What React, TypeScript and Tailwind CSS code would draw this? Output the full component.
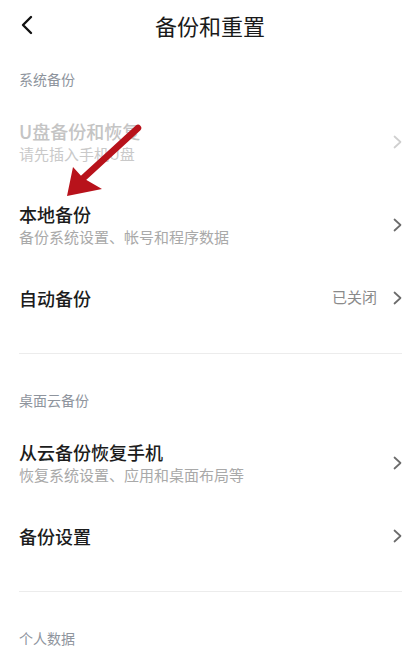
const FONT = "font-['Noto_Sans_CJK_SC','Noto_Sans',sans-serif]";

const Chevron = ({ disabled = false }: { disabled?: boolean }) => (
  <svg width="9" height="14" viewBox="0 0 9 14" fill="none" className="shrink-0">
    <path
      d="M1.5 1.5 L7.5 7 L1.5 12.5"
      stroke={disabled ? "#cfcfcf" : "#6b6b6b"}
      strokeWidth="1.7"
      strokeLinecap="round"
      strokeLinejoin="round"
    />
  </svg>
);

const SectionHeader = ({ label, first = false }: { label: string; first?: boolean }) => (
  <div className={`${first ? "pt-[19px]" : "pt-[36px]"} pb-[11px] text-[14px] leading-[20px] text-[#8e949d]`}>
    {label}
  </div>
);

type RowProps = {
  title: string;
  subtitle?: string;
  value?: string;
  disabled?: boolean;
};

const Row = ({ title, subtitle, value, disabled = false }: RowProps) => (
  <div className={`flex items-center justify-between ${subtitle ? "h-[83px]" : "h-[63px]"}`}>
    <div className="flex flex-col">
      <span
        className={`text-[18px] leading-[24px] font-medium ${disabled ? "text-[#c4c4c4]" : "text-[#1c1c1c]"}`}
      >
        {title}
      </span>
      {subtitle && (
        <span className={`text-[15px] leading-[22px] ${disabled ? "text-[#c9c9c9]" : "text-[#a9a9a9]"}`}>
          {subtitle}
        </span>
      )}
    </div>
    <div className="flex items-center gap-4">
      {value && <span className="text-[15px] text-[#8a8a8a]">{value}</span>}
      <Chevron disabled={disabled} />
    </div>
  </div>
);

export default function App() {
  return (
    <main className={`relative min-h-[662px] w-full overflow-hidden bg-white ${FONT}`}>
      {/* top bar */}
      <header className="relative flex h-[50px] items-center justify-center">
        <svg
          width="14"
          height="20"
          viewBox="0 0 14 20"
          fill="none"
          className="absolute left-[20px] top-[15px]"
        >
          <path d="M11 2 L3 10 L11 18" stroke="#111" strokeWidth="2.4" strokeLinecap="round" strokeLinejoin="round" />
        </svg>
        <h1 className="text-[22px] leading-none text-[#1a1a1a]">备份和重置</h1>
      </header>

      <div className="px-[19px] pr-[18px]">
        <SectionHeader label="系统备份" first />
        <Row title="U盘备份和恢复" subtitle="请先插入手机U盘" disabled />
        <Row title="本地备份" subtitle="备份系统设置、帐号和程序数据" />
        <Row title="自动备份" value="已关闭" />
        <div className="mt-[24px] h-px bg-[#ececec]" />

        <SectionHeader label="桌面云备份" />
        <Row title="从云备份恢复手机" subtitle="恢复系统设置、应用和桌面布局等" />
        <Row title="备份设置" />
        <div className="mt-[24px] h-px bg-[#ececec]" />

        <SectionHeader label="个人数据" />
      </div>

      {/* red annotation arrow */}
      <svg
        width="90"
        height="90"
        viewBox="0 0 90 90"
        className="pointer-events-none absolute left-[55px] top-[120px]"
      >
        <path d="M83 8 L24 62" stroke="#b8121b" strokeWidth="6.5" strokeLinecap="round" />
        <path d="M12 76 L18 47 L28 58 L47 69 Z" fill="#b8121b" />
      </svg>
    </main>
  );
}
